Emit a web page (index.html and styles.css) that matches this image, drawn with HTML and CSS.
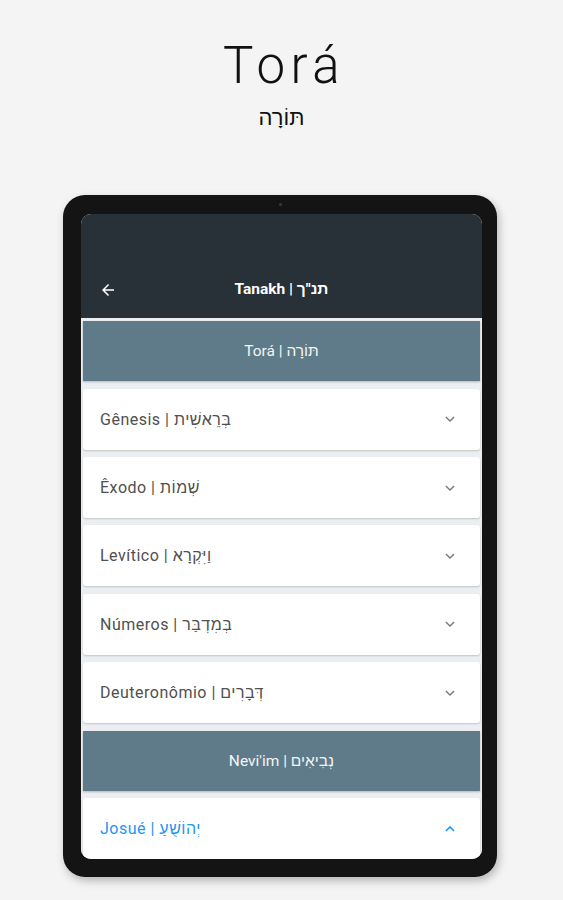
FILE: index.html
```html
<!DOCTYPE html>
<html lang="pt">
<head>
    <meta charset="UTF-8">
    <meta name="viewport" content="width=device-width, initial-scale=1.0">
    <title>Torá</title>
    <link rel="stylesheet" href="styles.css">
</head>
<body>
    <div class="hero">
        <h1 class="title">Torá</h1>
        <div class="subtitle">תּוֹרָה</div>
    </div>

    <div class="tablet">
        <span class="camera"></span>
        <div class="screen">
            <div class="appbar">
                <svg class="back" width="18" height="18" viewBox="0 0 24 24">
                    <path d="M20 11H7.83l5.59-5.59L12 4l-8 8 8 8 1.41-1.41L7.83 13H20v-2z" fill="#fff"/>
                </svg>
                <div class="appbar-title">Tanakh | תנ"ך</div>
            </div>

            <div class="list">
                <div class="section">Torá | תּוֹרָה</div>
                <div class="card">
                    <span class="name">Gênesis | בְּרֵאשִׁית</span>
                    <svg class="chev" width="14" height="14" viewBox="0 0 24 24"><path d="M5 8.5l7 7 7-7" fill="none" stroke="#7a7a7a" stroke-width="2.4"/></svg>
                </div>
                <div class="card">
                    <span class="name">Êxodo | שְׁמוֹת</span>
                    <svg class="chev" width="14" height="14" viewBox="0 0 24 24"><path d="M5 8.5l7 7 7-7" fill="none" stroke="#7a7a7a" stroke-width="2.4"/></svg>
                </div>
                <div class="card">
                    <span class="name">Levítico | וַיִּקְרָא</span>
                    <svg class="chev" width="14" height="14" viewBox="0 0 24 24"><path d="M5 8.5l7 7 7-7" fill="none" stroke="#7a7a7a" stroke-width="2.4"/></svg>
                </div>
                <div class="card">
                    <span class="name">Números | בְּמִדְבַּר</span>
                    <svg class="chev" width="14" height="14" viewBox="0 0 24 24"><path d="M5 8.5l7 7 7-7" fill="none" stroke="#7a7a7a" stroke-width="2.4"/></svg>
                </div>
                <div class="card">
                    <span class="name">Deuteronômio | דְּבָרִים</span>
                    <svg class="chev" width="14" height="14" viewBox="0 0 24 24"><path d="M5 8.5l7 7 7-7" fill="none" stroke="#7a7a7a" stroke-width="2.4"/></svg>
                </div>
                <div class="section">Nevi'im | נְבִיאִים</div>
                <div class="card open">
                    <span class="name">Josué | יְהוֹשֻׁעַ</span>
                    <svg class="chev" width="14" height="14" viewBox="0 0 24 24"><path d="M5 15.5l7-7 7 7" fill="none" stroke="#2196f3" stroke-width="2.8"/></svg>
                </div>
            </div>
        </div>
    </div>
</body>
</html>
```

FILE: styles.css
```css
body {
    margin: 0;
    padding: 0;
    background-color: #f4f4f4;
    font-family: Roboto, "Liberation Sans", "DejaVu Sans", sans-serif;
    height: 900px;
    overflow: hidden;
}

.hero {
    text-align: center;
    padding-top: 36px;
    height: 161px;
    box-sizing: border-box;
}

.title {
    margin: 0;
    font-weight: 300;
    font-size: 51px;
    line-height: 60px;
    letter-spacing: 5.5px;
    color: #111;
    padding-left: 5px;
}

.subtitle {
    font-family: "Liberation Sans", "DejaVu Sans", sans-serif;
    font-size: 22px;
    line-height: 28px;
    color: #111;
    margin-top: 8px;
}

.tablet {
    position: relative;
    width: 434px;
    height: 682px;
    margin-left: 63px;
    margin-top: 34px;
    box-sizing: border-box;
    padding: 19px 15px 18px 18px;
    background-color: #141414;
    border-radius: 22px;
    box-shadow: 2px 4px 8px rgba(0, 0, 0, 0.25);
}

.camera {
    position: absolute;
    top: 8px;
    left: 216px;
    width: 3px;
    height: 3px;
    border-radius: 50%;
    background-color: #2a3d55;
}

.screen {
    height: 100%;
    border-radius: 10px;
    overflow: hidden;
    background-color: #eceff1;
    display: flex;
    flex-direction: column;
}

.appbar {
    height: 105px;
    background-color: #283137;
    display: flex;
    align-items: flex-end;
    padding: 0 0 19px 18px;
    box-sizing: border-box;
    position: relative;
}

.back {
    display: block;
}

.appbar-title {
    position: absolute;
    left: 0;
    right: 0;
    bottom: 19px;
    text-align: center;
    color: #fff;
    font-weight: 700;
    font-size: 15.5px;
    line-height: 20px;
}

.list {
    padding: 3px 2px 0 2px;
    display: flex;
    flex-direction: column;
    gap: 7.4px;
    background-color: #eceff1;
}

.section {
    height: 60px;
    background-color: #5f7b89;
    color: #f2f5f7;
    display: flex;
    align-items: center;
    justify-content: center;
    font-size: 15.5px;
    box-shadow: 0 1px 2px rgba(0, 0, 0, 0.25);
}

.card {
    height: 61px;
    flex-shrink: 0;
    background-color: #fff;
    border-radius: 3px;
    display: flex;
    align-items: center;
    justify-content: space-between;
    padding: 0 23px 0 17px;
    box-shadow: 0 1px 2px rgba(0, 0, 0, 0.18);
}

.name {
    font-size: 16px;
    color: #505050;
    letter-spacing: 0.5px;
}

.open .name {
    color: #2196f3;
}

.chev {
    display: block;
}
```
